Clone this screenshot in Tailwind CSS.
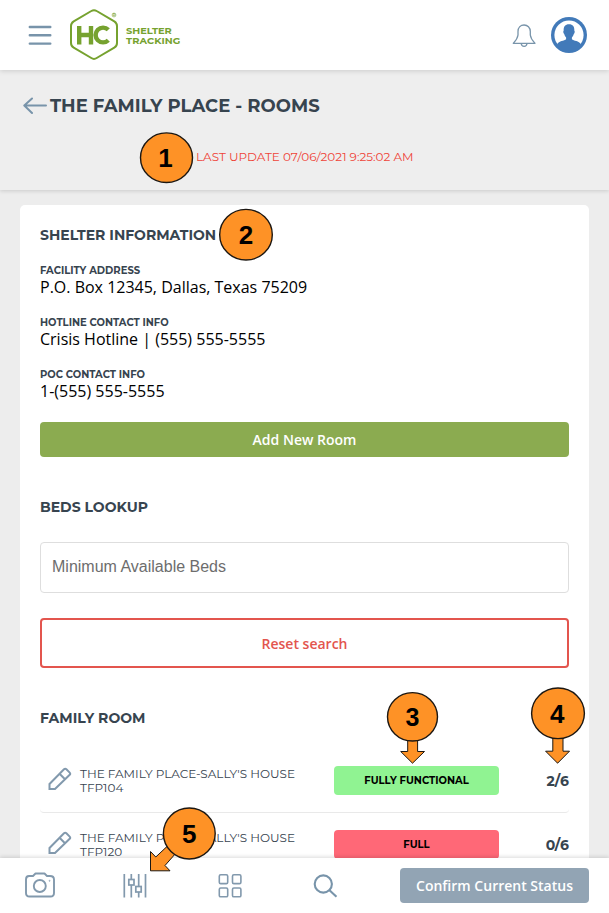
<!DOCTYPE html>
<html lang="en">
<head>
<meta charset="utf-8">
<title>Shelter Tracking</title>
<script src="https://cdn.jsdelivr.net/npm/@tailwindcss/browser@4"></script>
</head>
<body class="relative h-[913px] w-[609px] overflow-hidden bg-[#ededed] font-['Montserrat','Inter',sans-serif] text-[#37444f]">
<div class="flex h-full flex-col">
  <header class="relative z-10 flex h-[70px] shrink-0 items-center bg-white pl-7 pr-[22px] shadow-[0_1px_5px_rgba(0,0,0,0.15)]">
    <svg class="h-[22px] w-6" viewBox="28 24 24 22" stroke="#7894aa" stroke-width="2.4" stroke-linecap="round" role="img" aria-label="Menu"><path d="M29.8 27H50.3M29.8 35.2H50.3M29.8 43.6H50.3"/></svg>
    <svg class="ml-[18px] h-[54px] w-[50px]" viewBox="70 8 50 54" fill="none">
      <path d="M91.3 11 Q94 9.3 96.7 11 L114.3 21.3 Q117 23 117 26 V43 Q117 46 114.3 47.6 L96.7 58 Q94 59.8 91.3 58 L73.7 47.6 Q71 46 71 43 V26 Q71 23 73.7 21.3 Z" stroke="#76a22f" stroke-width="2"/>
      <path d="M79.2 26V44.5M91 26V44.5M79.2 35H91M108.3 29.8A7.4 7.4 0 1 0 108.3 40.2" stroke="#76a22f" stroke-width="4.4"/>
      <circle cx="114" cy="15" r="1.9" stroke="#76a22f" stroke-width=".6"/>
      <text x="114" y="16.1" text-anchor="middle" font-size="3" font-weight="700" fill="#76a22f">R</text>
    </svg>
    <div class="ml-[6px] pt-px text-[9.8px] font-bold leading-[10px] text-[#76a22f]"><div>SHELTER</div><div class="tracking-[0.1px]">TRACKING</div></div>
    <svg class="ml-auto h-[26px] w-[26px]" viewBox="511 22 26 26" fill="none" stroke="#7894aa" stroke-width="1.3" stroke-linejoin="round">
      <path d="M513.3 43.3H535C532.5 40.7 530.8 39 530.3 35V31.5C530.3 27.5 527.5 25 524.1 25S518 27.5 518 31.5V35C517.5 39 515.8 40.7 513.3 43.3Z"/>
      <path d="M521.2 43.5Q521.5 46.4 524.1 46.4T527 43.5"/>
    </svg>
    <svg class="ml-[14px] h-9 w-9" viewBox="0 0 36 36">
      <circle cx="18" cy="18" r="18" fill="#427ab9"/><circle cx="18" cy="18" r="14.6" fill="#fff"/>
      <path d="M18 7.2C21.8 7.2 23.6 9.6 23.3 13.6C24.1 14.1 23.7 16.6 22.8 17.1C22.4 18.8 21.7 19.6 20.9 20.4V22.3C22.5 24.2 28.3 23.7 29.7 27.2L27 33.5H9L6.3 27.2C7.7 23.7 13.5 24.2 15.1 22.3V20.4C14.3 19.6 13.6 18.8 13.2 17.1C12.3 16.6 11.9 14.1 12.7 13.6C12.4 9.6 14.2 7.2 18 7.2Z" fill="#427ab9"/>
    </svg>
  </header>
  <section class="h-[120px] shrink-0 bg-[#eee] shadow-[0_1px_4px_rgba(0,0,0,0.15)]">
    <div class="flex items-center pl-[23px] pt-[22px]">
      <svg class="h-[26px] w-[27px]" viewBox="23 92 27 26" fill="none" stroke="#7894aa" stroke-width="2" stroke-linecap="round" stroke-linejoin="round"><path d="M46 104.5H24.5M32 97.5L24.3 104.5L32 112"/></svg>
      <h1 class="whitespace-nowrap pt-px text-[18px] font-bold leading-[26px]">THE FAMILY PLACE - ROOMS</h1>
    </div>
    <p class="whitespace-nowrap pl-[196px] pt-[28px] text-[12px] font-normal leading-5 text-[#ef4438]">LAST UPDATE 07/06/2021 9:25:02 AM</p>
  </section>
  <main class="mx-5 mt-[15px] min-h-0 grow overflow-hidden rounded-t-[5px] bg-white px-5 pt-5">
    <h2 class="text-[14px] font-bold leading-5">SHELTER INFORMATION</h2>
    <dl class="mt-[18px] flex flex-col gap-[17px]">
      <div><dt class="pt-px text-[10px] font-bold leading-[14px]">FACILITY ADDRESS</dt><dd class="-mt-[2px] font-['Open_Sans'] text-[16px] leading-[22px] text-black">P.O. Box 12345, Dallas, Texas 75209</dd></div>
      <div><dt class="pt-px text-[10px] font-bold leading-[14px]">HOTLINE CONTACT INFO</dt><dd class="-mt-[2px] font-['Open_Sans'] text-[16px] leading-[22px] text-black">Crisis Hotline | (555) 555-5555</dd></div>
      <div><dt class="pt-px text-[10px] font-bold leading-[14px]">POC CONTACT INFO</dt><dd class="-mt-[2px] font-['Open_Sans'] text-[16px] leading-[22px] text-black">1-(555) 555-5555</dd></div>
    </dl>
    <button class="mt-5 block h-[35px] w-full rounded-[4px] bg-[#8bab50] font-['Open_Sans'] text-[14px] font-semibold text-white">Add New Room</button>
    <h2 class="mt-10 text-[14px] font-bold leading-5">BEDS LOOKUP</h2>
    <div class="mt-[25px] flex h-[51px] items-center rounded-[4px] border border-[#dedede] px-[11px] pb-[2px] font-['Liberation_Sans'] text-[16px] text-[#6d6d6d]">Minimum Available Beds</div>
    <button class="mt-[25px] block h-[50px] w-full rounded-[4px] border-2 border-[#e3554e] font-['Open_Sans'] text-[14px] font-semibold text-[#e3554e]">Reset search</button>
    <h2 class="mt-10 text-[14px] font-bold leading-5">FAMILY ROOM</h2>
    <div class="mt-5 flex h-[65px] items-center rounded-b border-b border-[#e9e9e9]">
      <svg class="mb-[2px] ml-2 h-6 w-6" viewBox="0 0 24 24" fill="none" stroke="#8299ad" stroke-width="2"><path d="M1.5 17L16 2.3Q17.2 1.2 18.4 2.3L21.7 5.6Q22.7 6.7 21.7 7.8L7 22H1.5ZM11.8 7L17 12.3"/></svg>
      <p class="ml-2 w-[254px] pt-[2px] text-[12px] font-normal leading-[14px]">THE FAMILY PLACE-SALLY'S HOUSE<br>TFP104</p>
      <div class="h-[29px] w-[165px] rounded-[4px] bg-[#90f392] text-center text-[10px] font-bold leading-[29px] text-black">FULLY FUNCTIONAL</div>
      <span class="ml-auto pt-[3px] text-[14px] font-bold">2/6</span>
    </div>
    <div class="flex h-[62px] items-center">
      <svg class="mb-[2px] ml-2 h-6 w-6" viewBox="0 0 24 24" fill="none" stroke="#8299ad" stroke-width="2"><path d="M1.5 17L16 2.3Q17.2 1.2 18.4 2.3L21.7 5.6Q22.7 6.7 21.7 7.8L7 22H1.5ZM11.8 7L17 12.3"/></svg>
      <p class="ml-2 w-[254px] pt-[2px] text-[12px] font-normal leading-[14px]">THE FAMILY PLACE-SALLY'S HOUSE<br>TFP120</p>
      <div class="h-[29px] w-[165px] rounded-[4px] bg-[#ff6877] text-center text-[10px] font-bold leading-[29px] text-black">FULL</div>
      <span class="ml-auto pt-[3px] text-[14px] font-bold">0/6</span>
    </div>
  </main>
  <nav class="relative z-10 flex h-[55px] shrink-0 items-center bg-white pb-px pl-[25px] pr-5 shadow-[0_-1px_4px_rgba(0,0,0,0.15)]">
    <svg class="h-[26px] w-[30px]" viewBox="25 872 30 26" fill="none" stroke="#8299ad" stroke-width="1.9" stroke-linejoin="round"><path d="M29 876H33L35.5 873.5H44.5L47 876H50Q54 876 54 879.5V893Q54 896.5 50.5 896.5H29.5Q26 896.5 26 893V879.5Q26 876 29 876Z"/><circle cx="39.8" cy="886" r="6"/><circle cx="49.6" cy="880.8" r=".5" stroke-width=".8"/></svg>
    <svg class="ml-[67px] h-[26px] w-[26px]" viewBox="122 872 26 26" fill="none" stroke="#8299ad" stroke-width="1.7"><path d="M124.3 874V897.5M131.3 874V879.5M131.3 885V897.5M138.7 874V886.5M138.7 892V897.5M145.5 874V897.5"/><rect x="128.8" y="879.5" width="5.2" height="5.5"/><rect x="135.8" y="886.5" width="5.4" height="5.5"/></svg>
    <svg class="ml-[69px] h-[26px] w-[26px]" viewBox="217 872 26 26" fill="none" stroke="#8299ad" stroke-width="1.6"><rect x="219.3" y="874.8" width="8.4" height="8.8" rx="1.4"/><rect x="232.5" y="874.8" width="8.4" height="8.8" rx="1.4"/><rect x="219.3" y="888" width="8.4" height="8.8" rx="1.4"/><rect x="232.5" y="888" width="8.4" height="8.8" rx="1.4"/></svg>
    <svg class="ml-[69px] h-[26px] w-[26px]" viewBox="312 872 26 26" fill="none" stroke="#7894aa" stroke-width="2.1"><circle cx="323.3" cy="884" r="8.6"/><path d="M329.2 890L336.5 896.8"/></svg>
    <button class="ml-auto h-[35px] w-[189px] whitespace-nowrap rounded-[4px] bg-[#92a4b4] font-['Open_Sans'] text-[14px] font-semibold text-white">Confirm Current Status</button>
  </nav>
</div>
<!-- Numbered callouts -->
<svg class="pointer-events-none absolute left-0 top-0 z-20 h-[913px] w-[609px]" viewBox="0 0 609 913" fill="#fe9226" stroke="#1c1712" stroke-width="1.4">
  <path d="M407.7 740H417.6V751.5H424.5L412.5 763.2L400.7 751.5H407.7ZM552.8 737H563V751.2H569.5L557.6 763.2L545.6 751.2H552.8Z" stroke-width="1"/>
  <path d="M167.5 846L155.8 857L150.5 851.5V870.8H170L165 865.5L176 853Z" stroke-width="1"/>
  <ellipse cx="166.5" cy="157.7" rx="26" ry="24.8"/>
  <ellipse cx="246" cy="234.7" rx="26.3" ry="25.3"/>
  <ellipse cx="412.5" cy="716.8" rx="25" ry="24.2"/>
  <ellipse cx="558" cy="713.3" rx="26.4" ry="25.3"/>
  <ellipse cx="189.3" cy="833.5" rx="25.9" ry="25.5"/>
  <g class="font-['Liberation_Sans'] text-[26px] font-bold" fill="#000" stroke="none" text-anchor="middle">
    <text x="165.5" y="166.5">1</text><text x="246" y="243.7">2</text><text x="412.5" y="725.5" class="text-[25px]">3</text><text x="557.2" y="722.8">4</text><text x="189.3" y="842.8">5</text>
  </g>
</svg>
</body>
</html>
